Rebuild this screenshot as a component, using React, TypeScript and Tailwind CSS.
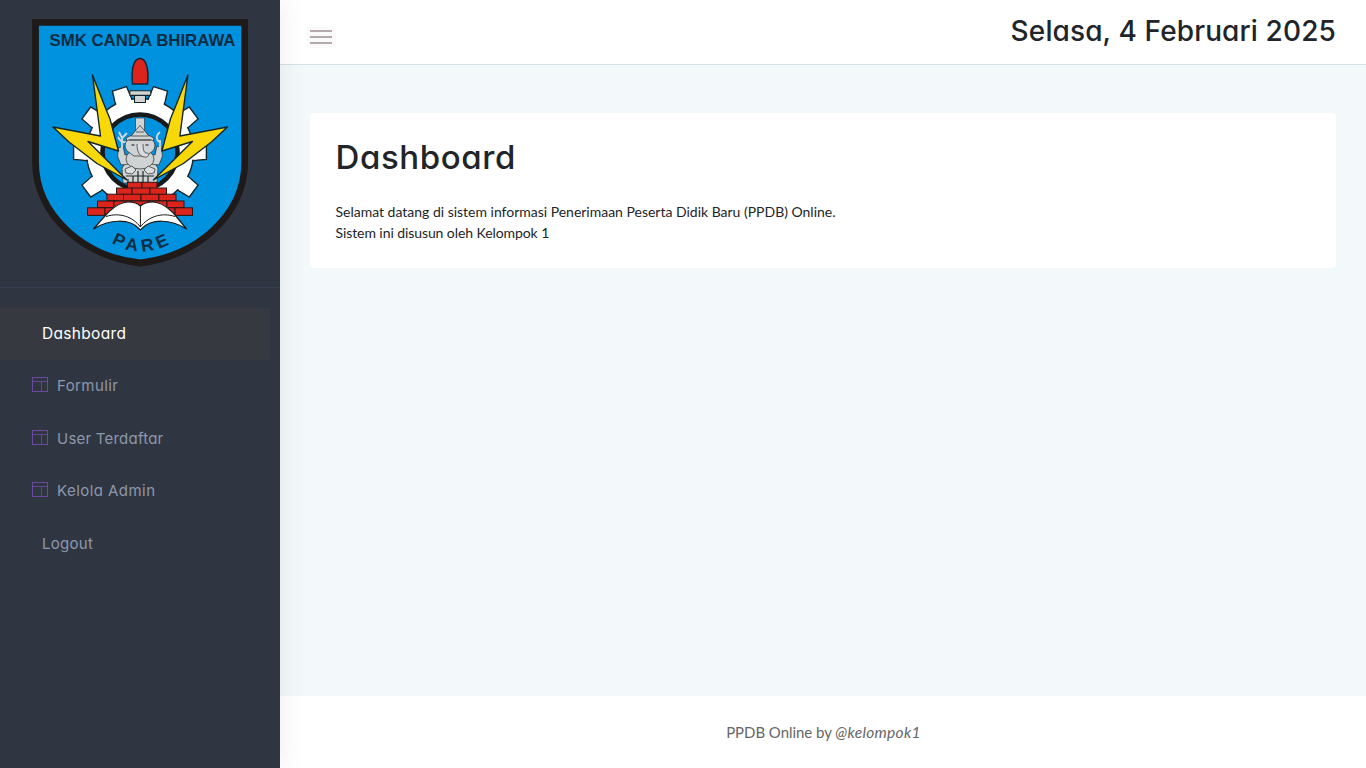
import React from "react";

const brickRows = [
  { y: 182.3, xs: [127.5, 142, 157] },
  { y: 188, xs: [116.5, 132, 150, 166.5] },
  { y: 194.2, xs: [107, 123.5, 141, 159, 176] },
  { y: 201, xs: [97.5, 114, 131, 149, 167, 184] },
  { y: 207.8, xs: [87.5, 105, 123, 141, 158, 175, 192.5] },
];

const teeth = [18, 54, 90, 126, 162, 198, 234, 270, 306, 342];

function Bolt() {
  return (
    <path
      d="M92.5 75 L103.5 103 L110 119 L118.5 151 L88 141.5 L127 180 L97 163.5 L69 142 L53 127 L100.5 136 Z"
      fill="#f8d808"
      stroke="#14262c"
      strokeWidth="1.4"
      strokeLinejoin="round"
    />
  );
}

function Crest() {
  return (
    <svg width="216" height="248" viewBox="32 19 216 248" className="block">
      <path
        d="M35.5 22.3 H244.7 V162 C245 215 196 257 140.2 263 C84 257 35.5 215 35.5 162 Z"
        fill="#0092de"
        stroke="#1e1a19"
        strokeWidth="6.8"
      />
      <text
        x="49.5"
        y="46"
        textLength="186"
        lengthAdjust="spacingAndGlyphs"
        fontSize="16.2"
        fontWeight="700"
        fill="#082c42"
        className="font-['Liberation_Sans',sans-serif]"
      >
        SMK CANDA BHIRAWA
      </text>

      <g stroke="#14262c" strokeWidth="1.4">
        {teeth.map((a) => (
          <path
            key={a}
            transform={`rotate(${a} 140 152)`}
            d="M131 104 L132.6 85.6 H147.4 L149 104 Z"
            fill="#fff"
          />
        ))}
        <circle cx="140" cy="152" r="53.5" fill="#fff" />
      </g>
      {teeth.map((a) => (
        <path key={a} transform={`rotate(${a} 140 152)`} d="M131.8 105 L132.7 95 H147.3 L148.2 105 Z" fill="#fff" />
      ))}
      <circle cx="140" cy="152" r="37.5" fill="#0092de" stroke="#17191b" strokeWidth="4.6" />

      <path d="M132.5 84 C131 70 133.5 58.5 140 58.5 C146.5 58.5 149 70 147.5 84 Z" fill="#dc241c" stroke="#122633" strokeWidth="1.5" />
      <g fill="#d2d4d4" stroke="#14262c" strokeWidth="1.1">
        <path d="M134.5 95 h11 v7.5 h-11 Z" />
        <rect x="129.8" y="90.8" width="21" height="4.6" rx="1" />
        <path d="M135.5 118 h9 v13 h-9 Z" strokeWidth=".6" />
      </g>

      <g fill="#d0d3d3" stroke="#25292a" strokeWidth=".7" strokeLinejoin="round">
        <path d="M122 168 L126 162 H154 L158 168 L157 183 H123 Z" />
        <path d="M118.5 148 L123 146 L125 155 L130 154 V164 L121 165 L117.5 156 Z" />
        <path d="M161.5 148 L157 146 L155 155 L150 154 V164 L159 165 L162.5 156 Z" />
        <path d="M119 132 L122 138 L127 133 M122 138 V148 M118 137 Q121 143 126 142" fill="none" strokeWidth="1.8" stroke="#d6d8d8" />
        <path d="M160 132 Q154 137 159 142 M160 140 V148" fill="none" strokeWidth="1.8" stroke="#d6d8d8" />
        <ellipse cx="140" cy="159" rx="14" ry="10" />
        <path d="M128 144 L126 138 L132 135 L136 130 L140 125.5 L144 130 L148 135 L154 138 L152 144 Z" />
        <path d="M128 140 C123 143 125 151 130 153 L134 156 H146 L150 153 C155 151 157 143 152 140 Z" />
        <path d="M137 144 C137 151 139 156 144 157 C149 158 150 153 147 153 C144 154 143 149 143 144" fill="#dadcdb" />
        <path d="M131 136 H149 M129 140 H151 M136 132 H144" fill="none" />
        <path d="M125 169 L132 166 L136 170 L132 174 L126 173 Z M155 169 L148 166 L144 170 L148 174 L154 173 Z" fill="#dcdedd" />
        <path d="M126 176 H154 M128 179 V183 M133 176 V182 M138 171 V182 M143 171 V182 M148 176 V182" fill="none" strokeWidth="1.2" />
      </g>
      <path d="M131.5 145 h3 M145.5 145 h3" stroke="#111" strokeWidth="1.2" />

      <Bolt />
      <g transform="translate(280.4 0) scale(-1 1)">
        <Bolt />
      </g>

      <g fill="#dc241c" stroke="#2a1716" strokeWidth="1">
        {brickRows.map((row, r) =>
          row.xs.slice(0, -1).map((x, i) => (
            <rect key={`${r}-${i}`} x={x} y={row.y} width={row.xs[i + 1] - x} height={r === 4 ? 7.6 : 6.5} />
          )),
        )}
      </g>

      <path
        d="M93.5 229 L108 212.5 C115 206 121 202 128 202 C134 202 138 203.5 140.4 206 C143 203.5 147 202 153 202 C160 202 166 206 173 212.5 L186.5 229 C171 219 151 218 140.4 229.8 C130 218 109 219 93.5 229 Z"
        fill="#fff"
        stroke="#1a1a1a"
        strokeWidth="1.2"
        strokeLinejoin="round"
      />
      <path
        d="M106 216.5 C120 212 133 217 140.4 227 C148 217 161 212 175 216.5 M140.4 206 V227"
        fill="none"
        stroke="#1a1a1a"
        strokeWidth="1"
      />
      <path id="crest-arc" d="M111.5 242.5 Q141 261 176 241" fill="none" />
      <text fontSize="17.5" fontWeight="700" fill="#082c42" letterSpacing="4.5" className="font-['Liberation_Sans',sans-serif]">
        <textPath href="#crest-arc">PARE</textPath>
      </text>
    </svg>
  );
}

function LayoutIcon() {
  return (
    <svg
      width="16"
      height="15"
      viewBox="0 0 16 15"
      fill="none"
      stroke="#6a4aa0"
      className="mb-[3px] shrink-0"
      shapeRendering="crispEdges"
    >
      <path d="M.5 .5 H15.5 V14.5 H.5 Z" />
      <path d="M1 4.5 H15 M9.5 5 V14" opacity=".85" />
    </svg>
  );
}

const links = [
  { label: "Dashboard", icon: false, active: true, text: "text-[15.5px] tracking-[0.32px]", height: "h-[52px]" },
  { label: "Formulir", icon: true, active: false, text: "tracking-[0.4px]", height: "h-[52px]" },
  { label: "User Terdaftar", icon: true, active: false, text: "pt-px tracking-[0.22px]", height: "h-[53px]" },
  { label: "Kelola Admin", icon: true, active: false, text: "tracking-[0.45px]", height: "h-[52px]" },
  { label: "Logout", icon: false, active: false, text: "pt-[2px] tracking-[0.3px]", height: "h-[53px]" },
];

export default function App() {
  return (
    <div className="flex h-[768px] w-full overflow-hidden bg-[#f3f8fb] font-['Lato',sans-serif] text-[#212529]">
      <aside className="relative z-10 flex w-[280px] shrink-0 flex-col bg-[#303641] shadow-[0_0_28px_rgba(0,0,0,0.08)]">
        <div className="flex h-[288px] justify-center border-b border-[#343e50] pt-[19px]">
          <Crest />
        </div>
        <nav className="flex flex-col pt-[20px] font-['Inter',sans-serif] text-[15px] [font-feature-settings:'cv11']">
          {links.map((l) => (
            <a
              key={l.label}
              className={`mr-[10px] flex items-center ${l.height} ${l.icon ? "gap-[9px] pl-8" : "pl-[42px]"} ${
                l.active ? "rounded-r-[2px] bg-[#363940] text-white" : "text-[#8d97ad]"
              }`}
            >
              {l.icon && <LayoutIcon />}
              <span className={l.text}>{l.label}</span>
            </a>
          ))}
        </nav>
      </aside>

      <div className="flex min-w-0 flex-1 flex-col">
        <header className="flex h-[65px] shrink-0 justify-between border-b border-[#d5e2e8] bg-white pr-[30px] pl-[26px]">
          <button className="mt-[26px] flex h-[22px] w-[30px] flex-col items-start gap-1 rounded-[3px] bg-[#fafafa] pt-1 pl-1" aria-label="Menu">
            <span className="h-[2px] w-[22px] bg-[#b4aaaa]" />
            <span className="h-[2px] w-[22px] bg-[#b4aaaa]" />
            <span className="h-[2px] w-[22px] bg-[#b4aaaa]" />
          </button>
          <h3 className="mt-[14px] font-['Inter',sans-serif] text-[28px] leading-[34px] font-medium tracking-[0.12px] whitespace-nowrap [font-feature-settings:'cv11']">
            Selasa, 4 Februari 2025
          </h3>
        </header>

        <main className="flex-1 px-[30px] pt-12">
          <section className="h-[155px] rounded bg-white px-[25.5px] pt-[25px]">
            <h2 className="font-['Inter',sans-serif] text-[33px] leading-[38px] font-medium tracking-[0.6px] [font-feature-settings:'cv11']">
              Dashboard
            </h2>
            <p className="mt-[25px] text-[14px] leading-[21px] tracking-[-0.01px]">
              Selamat datang di sistem informasi Penerimaan Peserta Didik Baru (PPDB) Online.
              <br />
              <span className="tracking-[-0.08px]">Sistem ini disusun oleh Kelompok 1</span>
            </p>
          </section>
        </main>

        <footer className="flex h-[72px] shrink-0 items-center justify-center bg-white pt-[2px] text-[15px] text-[#666]">
          <p className="pl-px">
            <span className="tracking-[-0.05px]">PPDB Online by </span>
            <em className="text-[15.5px] tracking-[0.3px]">@kelompok1</em>
          </p>
        </footer>
      </div>
    </div>
  );
}
